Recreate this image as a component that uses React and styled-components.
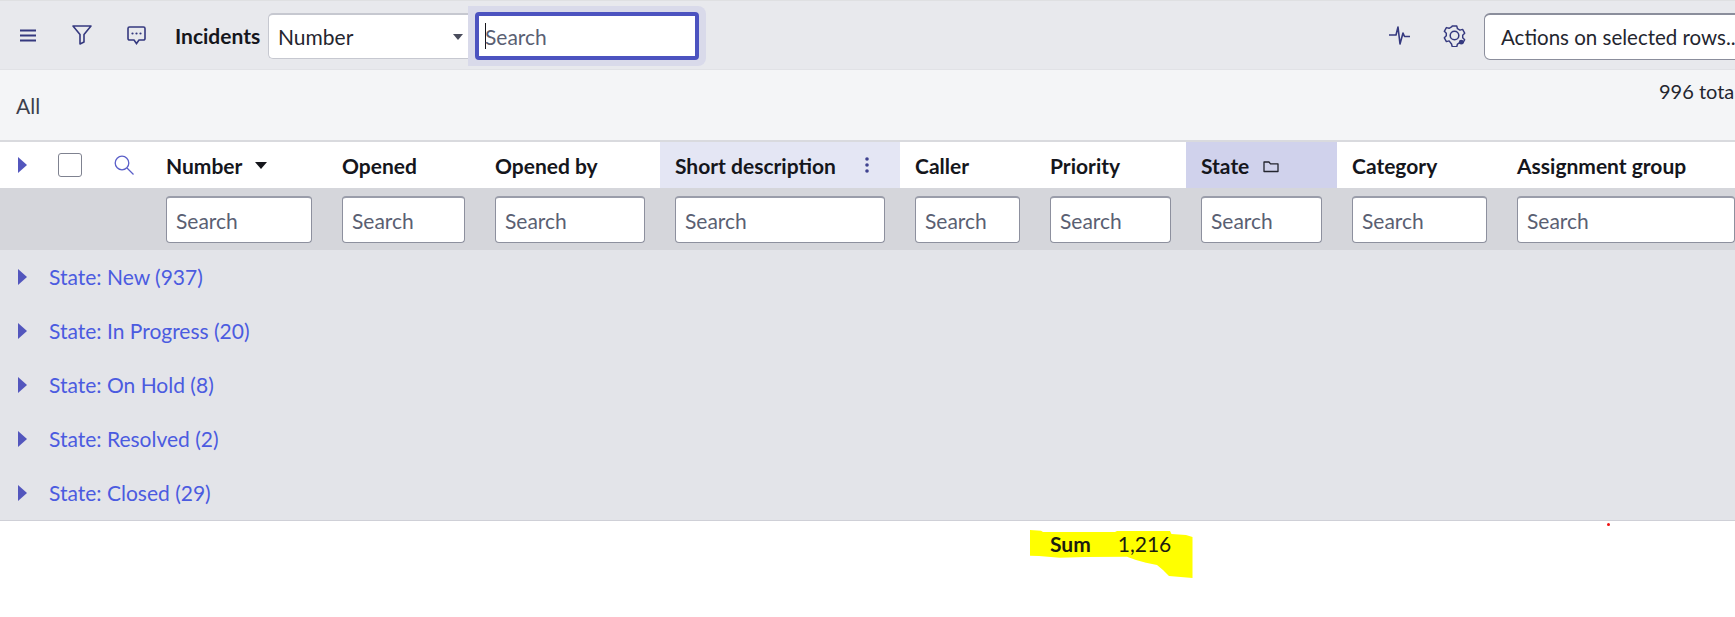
import React from "react";
import styled, { createGlobalStyle } from "styled-components";

const GlobalStyle = createGlobalStyle`
  html, body {
    margin: 0;
    background: #ffffff;
  }
  body {
    font-family: "Lato", "Liberation Sans", sans-serif;
    color: #1f2129;
    overflow: hidden;
  }
`;

const columns = "151px 176px 153px 180px 240px 135px 151px 151px 165px 233px";

const Page = styled.div`
  width: 1735px;
  height: 617px;
  overflow: hidden;
  position: relative;
`;

const Toolbar = styled.div`
  height: 68px;
  border-top: 1px solid #dfe0e2;
  background: #e8e9ed;
  display: flex;
  align-items: center;
  box-sizing: content-box;
`;

const IconSlot = styled.div`
  width: ${(p) => p.$width}px;
  margin-left: ${(p) => p.$left || 0}px;
  display: flex;
  justify-content: center;
  color: #35397f;
`;

const ListTitle = styled.span`
  margin-left: 29px;
  width: 93px;
  font-size: 21px;
  font-weight: 700;
  color: #15161c;
  white-space: nowrap;
`;

const FieldSelect = styled.div`
  width: 207px;
  height: 46px;
  box-sizing: border-box;
  margin-top: 2px;
  padding-left: 9px;
  background: #ffffff;
  border: 1px solid #c6c8d0;
  border-right: 0;
  border-top-width: 2px;
  border-radius: 5px 0 0 5px;
  display: flex;
  align-items: center;
  justify-content: space-between;
  font-size: 21px;
  color: #24262f;
`;

const SelectCaret = styled.i`
  width: 0;
  height: 0;
  margin-right: 12px;
  border-left: 5px solid transparent;
  border-right: 5px solid transparent;
  border-top: 6px solid #4a4d5c;
`;

const FocusHalo = styled.div`
  margin-left: -7px;
  margin-top: 2px;
  padding: 6px 7px;
  background: #d9daea;
  border-radius: 0 8px 8px 0;
  position: relative;
  z-index: 1;
`;

const FocusInput = styled.div`
  width: 224px;
  height: 48px;
  box-sizing: border-box;
  border: 4px solid #4c53c0;
  border-radius: 4px;
  background: #ffffff;
  display: flex;
  align-items: center;
  padding-left: 6px;
  font-size: 21px;
  color: #5a5f73;
`;

const TextCaret = styled.span`
  width: 1px;
  height: 26px;
  margin-right: -1px;
  background: #15161c;
`;

const RightTools = styled.div`
  margin-left: auto;
  display: flex;
  align-items: center;
  flex: none;
  margin-right: -40px;
`;

const ActionsButton = styled.div`
  width: 291px;
  height: 47px;
  box-sizing: border-box;
  margin-left: 18px;
  margin-top: 2px;
  padding-left: 16px;
  background: #ffffff;
  border: 1px solid #8b8e9c;
  border-top-width: 2px;
  border-radius: 6px;
  display: flex;
  align-items: center;
  font-size: 20.5px;
  white-space: nowrap;
  color: #24262f;
`;

const SummaryBar = styled.div`
  height: 70px;
  background: #f4f5f7;
  border-top: 1px solid #e1e2e6;
  border-bottom: 2px solid #d9dade;
  display: grid;
  grid-template-columns: 1659px 1fr;
`;

const ViewName = styled.span`
  padding: 23px 0 0 16px;
  font-size: 21px;
  color: #3c3f4c;
`;

const TotalCount = styled.span`
  padding-top: 9px;
  font-size: 20px;
  white-space: nowrap;
  color: #24262f;
`;

const HeaderRow = styled.div`
  display: grid;
  grid-template-columns: ${columns};
  height: 46px;
  background: #ffffff;
`;

const ControlsCell = styled.div`
  display: flex;
  align-items: center;
  padding-left: 18px;
`;

const ExpandArrow = styled.i`
  flex: none;
  width: 0;
  height: 0;
  border-top: 8px solid transparent;
  border-bottom: 8px solid transparent;
  border-left: 9px solid #5356bd;
`;

const RowCheck = styled.span`
  width: 22px;
  height: 22px;
  margin-left: 31px;
  border: 1px solid #7f8290;
  border-radius: 3px;
  background: #ffffff;
`;

const ColumnSearch = styled.div`
  margin-left: 32px;
  display: flex;
  color: #5a5fc8;
`;

const HeaderCell = styled.div`
  padding-left: 15px;
  display: flex;
  align-items: center;
  font-size: 21px;
  font-weight: 700;
  color: #15161c;
  background: ${(p) => p.$tint || "transparent"};
  white-space: nowrap;
`;

const SortCaret = styled.i`
  width: 0;
  height: 0;
  margin-left: 13px;
  border-left: 6px solid transparent;
  border-right: 6px solid transparent;
  border-top: 7px solid #15161c;
`;

const ColumnMenu = styled.div`
  margin-left: 29px;
  display: flex;
  color: #3f4290;
`;

const GroupMark = styled.div`
  margin-left: 14px;
  margin-top: 3px;
  display: flex;
  color: #23252e;
`;

const FilterRow = styled.div`
  display: grid;
  grid-template-columns: ${columns};
  height: 62px;
  background: #d5d6db;
  align-items: center;
`;

const FilterCell = styled.div`
  padding: 0 15px;
  &:last-child {
    padding-right: 0;
  }
`;

const FilterInput = styled.input`
  width: 100%;
  height: 47px;
  box-sizing: border-box;
  padding: 2px 0 0 9px;
  background: #ffffff;
  border: 1px solid #8d909e;
  border-top-width: 2px;
  border-top-color: #9a9daa;
  border-radius: 4px;
  outline: none;
  font: 400 21px "Lato", "Liberation Sans", sans-serif;
  display: block;

  &::placeholder {
    color: #5a5f73;
    opacity: 1;
  }
`;

const GroupList = styled.div`
  height: 270px;
  background: #e3e4e9;
  border-bottom: 1px solid #cfd0d7;
`;

const GroupRow = styled.div`
  height: 54px;
  padding-left: 18px;
  display: flex;
  align-items: center;
`;

const GroupLabel = styled.a`
  margin-left: 22px;
  margin-top: -2px;
  font-size: 21px;
  color: #4b5be0;
`;

const Footer = styled.div`
  position: relative;
  height: 96px;
`;

const Highlight = styled.svg`
  position: absolute;
  left: 1030px;
  top: 9px;
`;

const RedDot = styled.i`
  position: absolute;
  left: 1607px;
  top: 2px;
  width: 3px;
  height: 3px;
  border-radius: 50%;
  background: #f01010;
`;

const SumRow = styled.div`
  position: relative;
  padding: 10px 0 0 1050px;
  display: flex;
  gap: 27px;
  font-size: 21px;
  color: #1c1c10;
`;

const SumLabel = styled.b`
  font-weight: 700;
`;

const groups = [
  "State: New (937)",
  "State: In Progress (20)",
  "State: On Hold (8)",
  "State: Resolved (2)",
  "State: Closed (29)",
];

const headers = [
  { label: "Number", sort: true },
  { label: "Opened" },
  { label: "Opened by" },
  { label: "Short description", tint: "#e4e6f4", menu: true },
  { label: "Caller" },
  { label: "Priority" },
  { label: "State", tint: "#d0d2ec", grouped: true },
  { label: "Category" },
  { label: "Assignment group" },
];

const MenuIcon = () => (
  <svg width="18" height="13" viewBox="0 0 18 13" fill="none" stroke="currentColor" strokeWidth="2">
    <path d="M1 1.5h16M1 6.5h16M1 11.5h16" />
  </svg>
);

const FunnelIcon = () => (
  <svg width="20" height="20" viewBox="0 0 20 20" fill="none" stroke="currentColor" strokeWidth="1.6">
    <path d="M1 1h18l-7 8.5V17l-4 2V9.5z" strokeLinejoin="round" />
  </svg>
);

const ChatIcon = () => (
  <svg width="19" height="19" viewBox="0 0 19 19" fill="none" stroke="currentColor" strokeWidth="1.6">
    <path d="M2.5 1h14A1.5 1.5 0 0 1 18 2.5v10a1.500 1.500 0 0 1-1.500 1.500H12l-2.500 3.500L7 14H2.500A1.500 1.500 0 0 1 1 12.500v-10A1.500 1.500 0 0 1 2.500 1z" />
    <circle cx="5.500" cy="7.500" r="1.100" fill="currentColor" stroke="none" />
    <circle cx="9.500" cy="7.500" r="1.100" fill="currentColor" stroke="none" />
    <circle cx="13.500" cy="7.500" r="1.100" fill="currentColor" stroke="none" />
  </svg>
);

const PulseIcon = () => (
  <svg width="22" height="20" viewBox="0 0 22 20" fill="none" stroke="currentColor" strokeWidth="1.6">
    <path d="M0 10h7l2-8 2 17 3-11 1.500 3.500H21" strokeLinejoin="round" />
  </svg>
);

const GearIcon = () => (
  <svg width="23" height="23" viewBox="0 0 24 24" fill="none" stroke="currentColor" strokeWidth="1.6">
    <path d="M9.500 1.500h5l.8 3 2.700 1.500 3-.8 2.300 4.200-2.200 2.200v2.800l2.200 2.200-2.300 4.200-3-.8-2.700 1.500-.8 3h-5l-.8-3L6 18l-3 .8L.7 14.600l2.200-2.200V9.600L.7 7.400 3 3.200l3 .8 2.700-1.500z" transform="translate(12 12) scale(.94) translate(-12 -12)" strokeLinejoin="round" />
    <circle cx="12" cy="12" r="4.500" />
    <circle cx="19" cy="19" r="2.500" fill="currentColor" stroke="none" />
  </svg>
);

const SearchGlass = () => (
  <svg width="20" height="20" viewBox="0 0 20 20" fill="none" stroke="currentColor" strokeWidth="1.300">
    <circle cx="8" cy="8" r="6.800" />
    <path d="M13 13l6.500 6.500" />
  </svg>
);

const DotsIcon = () => (
  <svg width="4" height="16" viewBox="0 0 4 16" fill="currentColor">
    <circle cx="2" cy="2" r="1.800" />
    <circle cx="2" cy="8" r="1.800" />
    <circle cx="2" cy="14" r="1.800" />
  </svg>
);

const FolderIcon = () => (
  <svg width="16" height="13" viewBox="0 0 16 13" fill="none" stroke="currentColor" strokeWidth="1.300">
    <path d="M1 11.500V2h5l1.500 1.800H15v7.700z" strokeLinejoin="round" />
  </svg>
);

const App = () => (
  <Page>
    <GlobalStyle />
    <Toolbar>
      <IconSlot $width={18} $left={19}><MenuIcon /></IconSlot>
      <IconSlot $width={20} $left={35}><FunnelIcon /></IconSlot>
      <IconSlot $width={19} $left={35}><ChatIcon /></IconSlot>
      <ListTitle>Incidents</ListTitle>
      <FieldSelect>
        Number
        <SelectCaret />
      </FieldSelect>
      <FocusHalo>
        <FocusInput>
          <TextCaret />
          Search
        </FocusInput>
      </FocusHalo>
      <RightTools>
        <IconSlot $width={22}><PulseIcon /></IconSlot>
        <IconSlot $width={23} $left={32}><GearIcon /></IconSlot>
        <ActionsButton>Actions on selected rows...</ActionsButton>
      </RightTools>
    </Toolbar>

    <SummaryBar>
      <ViewName>All</ViewName>
      <TotalCount>996 total</TotalCount>
    </SummaryBar>

    <HeaderRow>
      <ControlsCell>
        <ExpandArrow />
        <RowCheck />
        <ColumnSearch><SearchGlass /></ColumnSearch>
      </ControlsCell>
      {headers.map((h) => (
        <HeaderCell key={h.label} $tint={h.tint}>
          {h.label}
          {h.sort && <SortCaret />}
          {h.menu && <ColumnMenu><DotsIcon /></ColumnMenu>}
          {h.grouped && <GroupMark><FolderIcon /></GroupMark>}
        </HeaderCell>
      ))}
    </HeaderRow>

    <FilterRow>
      <div />
      {headers.map((h) => (
        <FilterCell key={h.label}>
          <FilterInput placeholder="Search" readOnly />
        </FilterCell>
      ))}
    </FilterRow>

    <GroupList>
      {groups.map((g) => (
        <GroupRow key={g}>
          <ExpandArrow />
          <GroupLabel>{g}</GroupLabel>
        </GroupRow>
      ))}
    </GroupList>

    <Footer>
      <Highlight width="163" height="48" viewBox="0 0 163 48">
        <path
          d="M0 0L11 .7 13 2H85L87 1H140L141.500 4 156 5 162.500 7V48L139 46 133 40 127 35 116 32.700 106 30 97 26.700 55 27 30 27.700 9 26 0 25.700Z"
          fill="#ffff00"
        />
      </Highlight>
      <RedDot />
      <SumRow>
        <SumLabel>Sum</SumLabel>
        <span>1,216</span>
      </SumRow>
    </Footer>
  </Page>
);

export default App;
